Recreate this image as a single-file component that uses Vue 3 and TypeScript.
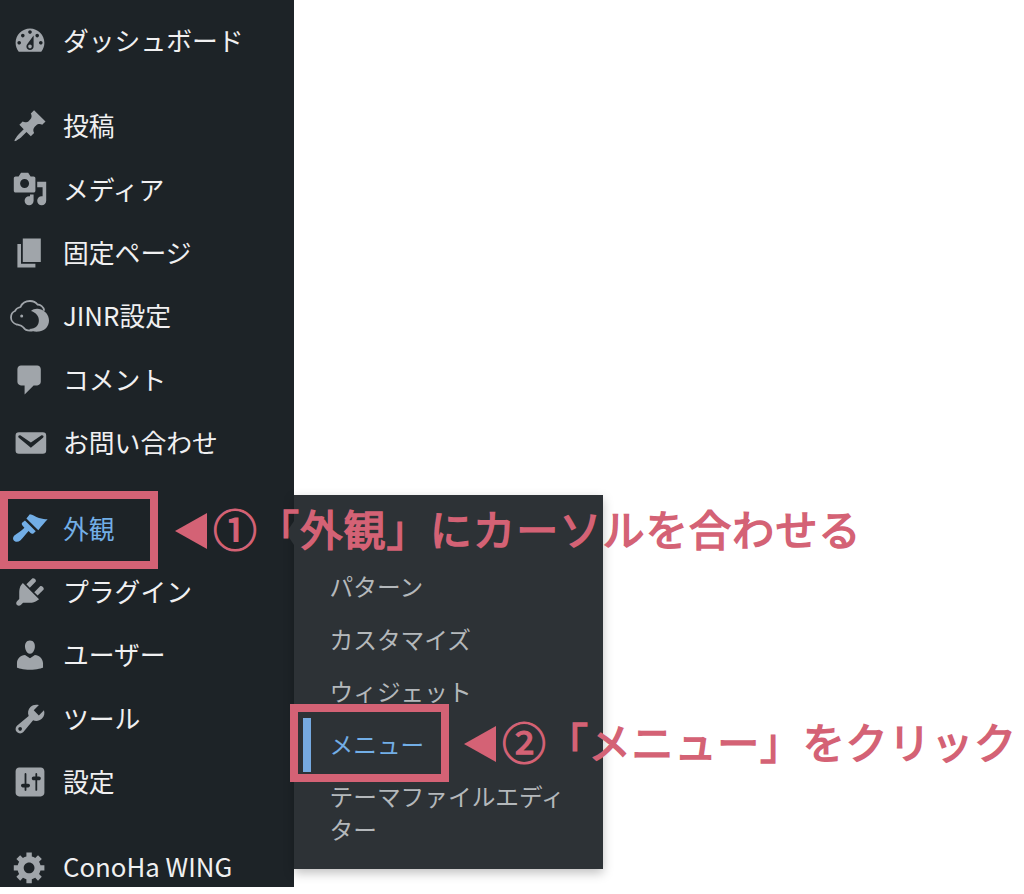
<script setup lang="ts">
interface Item { label: string; path?: string; sep?: boolean; active?: boolean; jinr?: boolean }
const items: Item[] = [
  { label: 'ダッシュボード', path: 'M3.76 16h12.48c1.1-1.37 1.76-3.11 1.76-5 0-4.42-3.58-8-8-8s-8 3.58-8 8c0 1.89.66 3.63 1.76 5zM10 4c.55 0 1 .45 1 1s-.45 1-1 1-1-.45-1-1 .45-1 1-1zM6 6c.55 0 1 .45 1 1s-.45 1-1 1-1-.45-1-1 .45-1 1-1zm8 0c.55 0 1 .45 1 1s-.45 1-1 1-1-.45-1-1 .45-1 1-1zm-5.37 5.55L12 7v6c0 1.1-.9 2-2 2s-2-.9-2-2c0-.57.24-1.08.63-1.45zM4 10c.55 0 1 .45 1 1s-.45 1-1 1-1-.45-1-1 .45-1 1-1zm12 0c.55 0 1 .45 1 1s-.45 1-1 1-1-.45-1-1 .45-1 1-1zm-5 3c0-.55-.45-1-1-1s-1 .45-1 1 .45 1 1 1 1-.45 1-1z' },
  { label: '投稿', sep: true, path: 'M10.44 3.02l1.82-1.82 6.36 6.35-1.83 1.82c-1.05-.68-2.48-.57-3.41.36l-.75.75c-.92.93-1.04 2.35-.35 3.41l-1.83 1.82-2.41-2.41-2.8 2.79c-.42.42-3.38 2.71-3.8 2.29s1.86-3.39 2.28-3.81l2.79-2.79L4.1 9.36l1.83-1.82c1.05.69 2.48.57 3.4-.36l.75-.75c.93-.92 1.05-2.35.36-3.41z' },
  { label: 'メディア', path: 'M13 11V4c0-.55-.45-1-1-1h-1.67L9 1H5L3.67 3H2c-.55 0-1 .45-1 1v7c0 .55.45 1 1 1h10c.55 0 1-.45 1-1zM7 4.5c1.38 0 2.5 1.12 2.5 2.5S8.38 9.5 7 9.5 4.5 8.38 4.5 7 5.62 4.5 7 4.5zM14 6h5v10.5c0 1.38-1.12 2.5-2.5 2.5S14 17.88 14 16.5s1.12-2.5 2.5-2.5c.17 0 .34.02.5.05V9h-3V6zm-4 8.05V13h2v3.5c0 1.38-1.12 2.5-2.5 2.5S7 17.88 7 16.5 8.12 14 9.5 14c.17 0 .34.02.5.05z' },
  { label: '固定ページ', path: 'M6 15V2h10v13H6zm-1 1h8v2H3V5h2v11z' },
  { label: 'JINR設定', jinr: true },
  { label: 'コメント', path: 'M5 2h9c1.1 0 2 .9 2 2v7c0 1.1-.9 2-2 2h-2l-5 5v-5H5c-1.1 0-2-.9-2-2V4c0-1.1.9-2 2-2z' },
  { label: 'お問い合わせ', path: 'M3.87 4h13.25C18.37 4 19 4.59 19 5.79v8.42c0 1.19-.63 1.79-1.88 1.79H3.87c-1.25 0-1.88-.6-1.88-1.79V5.79c0-1.2.63-1.79 1.88-1.79zm6.62 8.6l6.74-5.53c.24-.2.43-.66.13-1.07-.29-.41-.82-.42-1.17-.17l-5.7 3.86L4.8 5.83c-.35-.25-.88-.24-1.17.17-.3.41-.11.87.13 1.07z' },
  { label: '外観', sep: true, active: true, path: 'M8 4.7L9.9 2.4C11.5 2.6 13 3.8 15 4.4C16.8 4.9 18.4 5 19.8 5.2C18.3 6.8 16.5 9 14.6 11.2ZM7.2 5.8L13.2 11.8L11.9 13C11.3 13.5 10.7 13.2 10.3 12.8L9.2 11.7C7.8 13.3 6.2 15.4 4.6 17C3.3 18 1.8 17.8 1 17C.3 16 .5 15 1.3 14.2C3 12.8 5.2 11.5 6.9 9.8L5.8 8.6C5.3 8 5.3 7.4 5.8 7Z' },
  { label: 'プラグイン', path: 'M13.11 4.36L9.87 7.6 8 5.73l3.24-3.24c.35-.34 1.05-.2 1.56.32.52.51.66 1.21.31 1.55zm-8 1.77l.91-1.12 9.01 9.01-1.19.84c-.71.71-2.63 1.16-3.82 1.16H6.14L4.9 17.26c-.59.59-1.54.59-2.12 0-.59-.58-.59-1.53 0-2.12l1.24-1.24v-3.88c0-1.13.4-3.19 1.09-3.89zm7.26 3.97l3.24-3.24c.34-.35 1.04-.21 1.55.31.52.51.66 1.21.31 1.55l-3.24 3.25z' },
  { label: 'ユーザー', path: 'M10 9.25c-2.27 0-2.73-3.44-2.73-3.44C7 4.02 7.82 2 9.97 2c2.16 0 2.98 2.02 2.71 3.81 0 0-.41 3.44-2.68 3.44zm0 2.57L12.72 10c2.39 0 4.52 2.33 4.52 4.53v2.49s-3.65 1.13-7.24 1.13c-3.65 0-7.24-1.13-7.24-1.13v-2.49c0-2.25 1.94-4.48 4.47-4.48z' },
  { label: 'ツール', path: 'M16.68 9.77c-1.34 1.34-3.3 1.67-4.95.99l-5.41 6.52c-.99.99-2.59.99-3.58 0s-.99-2.59 0-3.57l6.52-5.42c-.68-1.65-.35-3.61.99-4.95 1.28-1.28 3.12-1.62 4.72-1.06l-2.89 2.89 2.82 2.82 2.86-2.87c.53 1.58.18 3.39-1.08 4.65zM3.81 16.21c.4.39 1.04.39 1.43 0 .4-.4.4-1.04 0-1.43-.39-.4-1.03-.4-1.43 0-.39.39-.39 1.03 0 1.43z' },
  { label: '設定', path: 'M18 16V4c0-1.1-.9-2-2-2H4c-1.1 0-2 .9-2 2v12c0 1.1.9 2 2 2h12c1.1 0 2-.9 2-2zM8 11h1c.55 0 1 .45 1 1s-.45 1-1 1H8v1.5c0 .28-.22.5-.5.5s-.5-.22-.5-.5V13H6c-.55 0-1-.45-1-1s.45-1 1-1h1V5.5c0-.28.22-.5.5-.5s.5.22.5.5V11zm5-2h-1c-.55 0-1-.45-1-1s.45-1 1-1h1V5.5c0-.28.22-.5.5-.5s.5.22.5.5V7h1c.55 0 1 .45 1 1s-.45 1-1 1h-1v5.5c0 .28-.22.5-.5.5s-.5-.22-.5-.5V9z' },
  { label: 'ConoHa WING', sep: true, path: 'M18 12h-2.18c-.17.7-.44 1.35-.81 1.93l1.54 1.54-2.1 2.1-1.54-1.54c-.58.36-1.23.63-1.91.79V19H8v-2.18c-.68-.16-1.33-.43-1.91-.79l-1.54 1.54-2.12-2.12 1.54-1.54c-.36-.58-.63-1.23-.79-1.91H1V9.03h2.17c.16-.7.44-1.35.8-1.94L2.43 5.55l2.1-2.1 1.54 1.54c.58-.37 1.24-.64 1.93-.81V2h3v2.18c.68.16 1.33.43 1.91.79l1.54-1.54 2.12 2.12-1.54 1.54c.36.59.64 1.24.8 1.94H18V12zm-8.5 1.5c1.66 0 3-1.34 3-3s-1.34-3-3-3-3 1.34-3 3 1.34 3 3 3z' },
]
const subItems = [
  { label: 'パターン' },
  { label: 'カスタマイズ' },
  { label: 'ウィジェット' },
  { label: 'メニュー', current: true },
  { label: 'テーマファイルエディター' },
]
</script>

<template>
  <div class="page">
    <nav class="sidebar">
      <a
        v-for="item in items"
        :key="item.label"
        class="row"
        :class="{ sep: item.sep, active: item.active }"
      >
        <svg v-if="item.jinr" class="icon jinr" viewBox="0 0 36 36">
          <path class="jinr-line" d="M20 32.5C16 33 13 32 11.5 29.5C9.5 27 7 27 4.5 26.5C1.5 25.5-1 22.5-1 19.5C-1 16.5.5 14 3 13C4 10.5 6.5 9.5 8.5 9C10 5.5 13.5 3 18 3C21.5 3 24 4.5 25.5 6.5C28.5 6.5 31.5 9 32 12" />
          <circle class="jinr-fill" cx="9.7" cy="18" r="1.5" />
          <path class="jinr-fill" d="M19 13C21 11 24 10.5 27 11C33 12 37 17 37 22.5C37 28 33 33 27 33.5C23 34 19 33 17 31C20 31 23.5 30 25 28C27.5 25 27.5 20 25 17C23.5 15 21 13.5 19 13Z" />
        </svg>
        <svg v-else class="icon" viewBox="0 0 20 20"><path :d="item.path" /></svg>
        <span class="label">{{ item.label }}</span>
      </a>
    </nav>

    <div class="flyout">
      <span class="notch"></span>
      <a
        v-for="sub in subItems"
        :key="sub.label"
        class="sub"
        :class="{ current: sub.current }"
      >{{ sub.label }}</a>
    </div>

    <div class="box box-one"></div>
    <div class="box box-two"></div>

    <div class="note note-one">
      <span class="tri"></span>
      <span class="circled">①</span>
      <span class="note-text">「外観」にカーソルを合わせる</span>
    </div>
    <div class="note note-two">
      <span class="tri"></span>
      <span class="circled">②</span>
      <span class="note-text">「メニュー」をクリック</span>
    </div>
  </div>
</template>

<style scoped>
.page {
  position: relative;
  width: 1024px;
  height: 894px;
  overflow: hidden;
  background: #fff;
  font-family: "Noto Sans CJK JP", "Noto Sans", sans-serif;
}
.sidebar {
  width: 294px;
  height: 887px;
  padding-top: 9px;
  box-sizing: border-box;
  overflow: hidden;
  background: #1d2327;
  display: flex;
  flex-direction: column;
}
.row {
  flex: 0 0 63.4px;
  display: flex;
  align-items: center;
  padding-left: 12px;
  color: #f0f0f1;
  font-size: 25.8px;
}
.row.sep { margin-top: 22px; }
.row.active { color: #72aee6; }
.icon {
  width: 36px;
  height: 36px;
  flex: none;
  fill: #a0a5aa;
  overflow: visible;
}
.active .icon { fill: #72aee6; }
.label { margin: 0 0 2px 15px; white-space: nowrap; line-height: 1; }
.jinr-line { fill: none; stroke: #a0a5aa; stroke-width: 1.8; stroke-linecap: round; }
.jinr-fill { fill: #a0a5aa; }
.flyout {
  position: absolute;
  left: 294px;
  top: 495px;
  width: 309px;
  height: 374px;
  box-sizing: border-box;
  padding-top: 65.5px;
  background: #2d3236;
  box-shadow: 0 4px 10px rgba(0, 0, 0, 0.25);
  display: flex;
  flex-direction: column;
}
.notch {
  position: absolute;
  left: -8px;
  top: 26px;
  border-style: solid;
  border-width: 12px 8px 12px 0;
  border-color: transparent #2d3236 transparent transparent;
}
.sub {
  padding: 9.5px 30px 0 35.5px;
  min-height: 52.5px;
  box-sizing: border-box;
  color: #b4b8bb;
  font-size: 23.7px;
  line-height: 33px;
}
.sub.current {
  color: #72aee6;
  position: relative;
}
.sub.current::before {
  content: "";
  position: absolute;
  left: 9px;
  top: 0;
  width: 8px;
  height: 54px;
  background: #76aae1;
}
.box {
  position: absolute;
  box-sizing: border-box;
  border: 8px solid #d46275;
}
.box-one { left: 0; top: 491px; width: 158px; height: 78px; }
.box-two { left: 290px; top: 704px; width: 159px; height: 78px; }
.note {
  position: absolute;
  display: flex;
  align-items: center;
  color: #d46275;
  white-space: nowrap;
  line-height: 44px;
  height: 44px;
}
.note-one { left: 175px; top: 509px; }
.note-two { left: 464px; top: 722px; }
.tri {
  flex: none;
  width: 0;
  height: 0;
  border-style: solid;
  border-width: 18.5px 32px 18.5px 0;
  border-color: transparent #d46275 transparent transparent;
}
.circled {
  width: 44px;
  margin: 0 0 6px 6px;
  text-align: center;
  font-size: 44px;
  font-weight: 400;
  -webkit-text-stroke: 1.2px #d46275;
}
.note-text {
  margin-bottom: 6px;
  font-size: 42px;
  font-weight: 400;
  letter-spacing: 0.8px;
  -webkit-text-stroke: 1.6px #d46275;
}
.note-one .note-text {
  margin-bottom: 7px;
  letter-spacing: 1.2px;
}
</style>

<style>
html, body { margin: 0; background: #fff; }
</style>
